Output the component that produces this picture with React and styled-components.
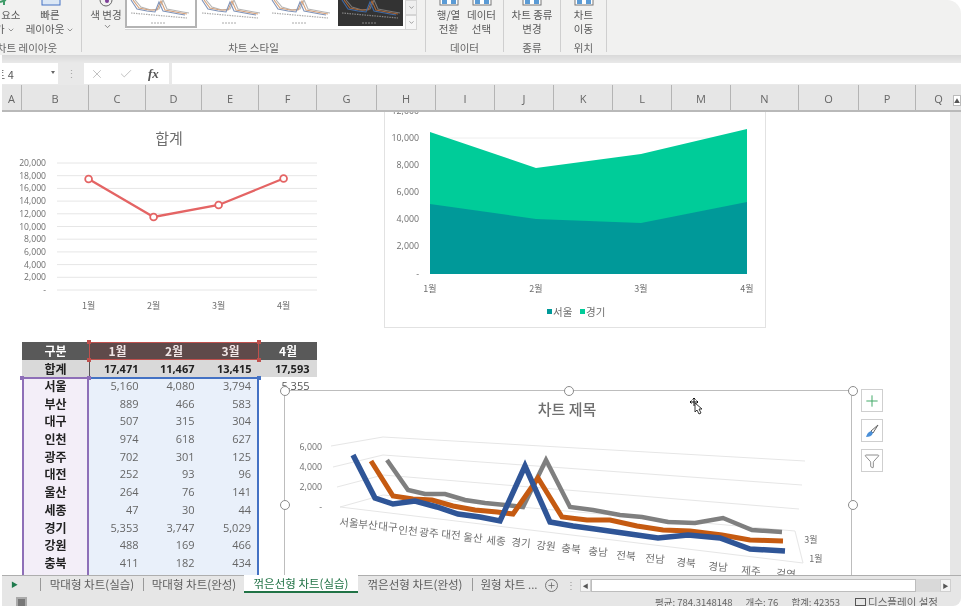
import React from 'react';
import styled, { createGlobalStyle } from 'styled-components';
import { X, Check, ChevronDown, Plus, Funnel } from 'lucide-react';

const KR = `"Noto Sans CJK KR", "Open Sans", sans-serif`;
const NUM = `"Open Sans", "Noto Sans CJK KR", sans-serif`;

const Global = createGlobalStyle`
  html, body { margin: 0; padding: 0; background: #fff; overflow: hidden; }
  #root { width: 961px; height: 606px; overflow: hidden; }
  * { box-sizing: border-box; }
`;

const Page = styled.div`
  width: 961px; height: 606px; position: relative; overflow: hidden;
  display: flex; flex-direction: column; background: #fff;
  font-family: ${KR}; color: #555; filter: blur(0.6px);
`;

/* ribbon */
const Ribbon = styled.div`
  height: 55px; flex: none; display: flex; background: #f1f1f0; overflow: hidden;
  border-top-right-radius: 14px;
`;
const Group = styled.section`
  width: ${p => p.$w}px; flex: none; height: 52px; position: relative;
  display: flex; flex-direction: column; border-right: 1px solid #cfcfcf;
`;
const GroupBody = styled.div`
  flex: 1; display: flex; justify-content: ${p => p.$justify || 'center'}; min-height: 0;
  margin-left: ${p => p.$ml || 0}px;
`;
const GroupLabel = styled.div`
  height: 15px; margin-bottom: -3px; font-size: 10.5px; line-height: 15px; text-align: center; color: #666; white-space: nowrap;
  margin-left: ${p => p.$ml || 0}px;
`;
const RibbonButton = styled.div`
  width: ${p => p.$w}px; flex: none; display: flex; flex-direction: column; align-items: center;
  padding-left: ${p => p.$pl || 0}px;
  font-size: 10.5px; line-height: 13.5px; color: #5a5a5a; white-space: nowrap;
`;
const IconStub = styled.svg`
  display: block; width: 24px; height: 8px; flex: none;
`;
const Caret = styled(ChevronDown)`
  display: inline-block; vertical-align: -1px; margin-left: 2px; color: #666;
`;
const Gallery = styled.div`
  width: 292px; height: 30px; background: #fff; display: flex; align-items: flex-start;
  border-bottom: 1px solid #d6d6d6; position: relative;
`;
const Thumb = styled.svg`
  display: block; flex: none; width: ${p => p.$w}px; height: 26px; margin-left: ${p => p.$ml}px;
  background: ${p => p.$dark ? '#333' : '#fff'};
  outline: ${p => p.$sel ? '2px solid #b4b4b4' : 'none'};
`;
const GalleryArrows = styled.div`
  position: absolute; right: 0; top: 0; width: 12px; height: 30px; display: flex; flex-direction: column;
`;
const GalleryArrow = styled.div`
  flex: 1; border: 1px solid #d5d5d5; background: ${p => p.$on ? '#f6f6f6' : '#efefef'};
  display: flex; align-items: center; justify-content: center; color: #666;
`;

/* formula bar */
const Shade = styled.div`
  height: 8px; flex: none; margin-left: 2px;
  background: linear-gradient(#d9d9d9, #e9e9e9);
`;
const FormulaRow = styled.div`
  height: 22px; flex: none; margin-left: 2px; display: flex; background: #e9e9e9;
`;
const NameBox = styled.div`
  width: 56px; height: 21px; flex: none; background: #fff; display: flex; align-items: center;
  position: relative; overflow: hidden; font-size: 11px; color: #555;
`;
const NameText = styled.span`
  margin-left: -17px; white-space: nowrap; font-family: ${KR};
`;
const NameCaret = styled.span`
  position: absolute; right: 3px; top: 8px; width: 0; height: 0;
  border-left: 2.5px solid transparent; border-right: 2.5px solid transparent; border-top: 3px solid #666;
`;
const Grip = styled.div`
  width: 26px; flex: none; text-align: center; color: #aaa; font-size: 11px; line-height: 20px;
`;
const FxBox = styled.div`
  width: 85px; height: 21px; flex: none; background: #fff; display: flex; align-items: center;
  gap: 15px; padding-left: 6px; color: #b4b4b4;
`;
const Fx = styled.i`
  font-family: "Liberation Serif", serif; font-size: 13px; color: #555; font-weight: 700;
`;
const FormulaInput = styled.div`
  flex: 1; height: 21px; background: #fff; margin-left: 3px;
`;

/* column headers */
const HeaderRow = styled.div`
  height: 27px; flex: none; margin-left: 2px; display: flex; background: #e6e6e6;
  border-bottom: 2px solid #b9b9b9;
`;
const ColHead = styled.div`
  width: ${p => p.$w}px; flex: none; border-right: 1px solid #b4b4b4; text-align: center;
  font: 11px/27px ${NUM}; color: #666; &:last-child { border-right: 0; }
`;

/* sheet */
const Canvas = styled.div`
  height: 463px; flex: none; position: relative; overflow: hidden; background: #fff; padding: 230px 0 0 22px;
`;
const Table = styled.div`
  width: 295px;
  position: relative;
`;
const Row = styled.div`
  display: grid; grid-template-columns: 67px 57px 56px 57px 58px; height: ${p => p.$h}px;
`;
const tones = {
  head: 'background:#595959;color:#fff;font-weight:700;',
  sel: 'background:#5f4a4a;color:#f0e6e6;font-weight:700;',
  total: 'background:#d9d9d9;color:#222;font-weight:700;',
  name: 'background:#f3eef8;color:#222;font-weight:700;border-left:2px solid #8e6fb8;border-right:2px solid #8e6fb8;',
  val: 'background:#e9f0fa;color:#666;',
  valEnd: 'background:#e9f0fa;color:#666;border-right:2px solid #4472c4;',
  blank: 'background:#fff;color:#555;',
};
const Cell = styled.div`
  ${p => tones[p.$t]}
  font-family: ${p => p.$num ? NUM : KR};
  font-size: ${p => p.$num ? 11 : 12}px;
  line-height: ${p => p.$h}px;
  text-align: ${p => p.$num ? 'right' : 'center'};
  padding-right: ${p => p.$num ? (p.$t === 'valEnd' ? 6 : 7.5) : 0}px;
  white-space: nowrap;
`;
const SelBox = styled.div`
  position: absolute; left: 67px; top: 0; width: 170px; height: 18px; border: 1.5px solid #c0504d; pointer-events: none;
`;
const TotalTick = styled.div`
  position: absolute; left: 67px; top: 18px; width: 1px; height: 17px; background: #555;
`;
const RuleLine = styled.div`
  position: absolute; top: 35px; left: ${p => p.$l}px; width: ${p => p.$w}px; height: 2px; background: ${p => p.$c};
`;
const Dot = styled.i`
  position: absolute; left: ${p => p.$x - 2}px; top: ${p => p.$y - 2}px; width: 4px; height: 4px; background: ${p => p.$c};
`;

/* floating objects */
const Floating = styled.div`
  position: absolute; left: ${p => p.$x}px; top: ${p => p.$y - 112}px; width: ${p => p.$w}px; height: ${p => p.$h}px;
  background: ${p => p.$fill ? '#fff' : 'transparent'};
  border: ${p => p.$line ? `1px solid ${p.$line}` : '0'};
`;
const ChartSvg = styled.svg`
  display: block; position: absolute; left: ${p => p.$inset || 0}px; top: ${p => p.$inset || 0}px;
  overflow: hidden;
  text { font-family: ${NUM}; fill: #6f6f6f; }
`;
const Handle = styled.i`
  position: absolute; left: ${p => p.$x - 284 - 5}px; top: ${p => p.$y - 390 - 5}px; width: 10px; height: 10px;
  border-radius: 50%; background: #fff; border: 1.5px solid #8c8c8c;
`;
const SideTools = styled.div`
  position: absolute; left: 861px; top: 277px; display: flex; flex-direction: column; gap: 7px;
`;
const SideTool = styled.div`
  width: 22px; height: 23px; background: #fff; border: 1px solid #cfcfcf; display: flex; align-items: center; justify-content: center;
`;
const MoveCursor = styled.svg`
  position: absolute; left: 689px; top: 285px; width: 14px; height: 20px;
`;

/* scrollbars */
const VScroll = styled.div`
  position: absolute; left: 950px; top: 95px; width: 11px; height: 480px; display: flex; flex-direction: column;
  background: linear-gradient(transparent 17px, #e6e6e6 17px);
`;
const VBtn = styled.div`
  height: 11px; margin-left: 3px; background: #fff; border: 1px solid #bbb; color: #555; font-size: 6px; line-height: 9px; text-align: center;
`;

/* tabs */
const TabBar = styled.div`
  height: 20px; flex: none; display: flex; align-items: stretch; background: #e6e6e6; border-top: 1px solid #aeaeae;
  margin-left: 2px; font-size: 11.5px; color: #5e5e5e; white-space: nowrap;
`;
const TabArrow = styled.div`
  width: 38px; flex: none; color: #1f7a4d; font-size: 7px; line-height: 17px; padding-left: 9px;
`;
const Tab = styled.div`
  width: ${p => p.$w}px; flex: none; text-align: center;
  border-left: ${p => p.$sep ? '1px solid #999' : '0'};
  margin: ${p => p.$active ? '-1px 0 0' : '2px 0 4px'};
  line-height: ${p => p.$active ? '17px' : '12px'};
  ${p => p.$active ? 'background:#fff;color:#217346;border-bottom:2px solid #217346;height:18px;' : ''}
`;
const AddSheet = styled.div`
  width: 13px; height: 13px; flex: none; border: 1px solid #777; border-radius: 50%; margin-top: 3px;
  display: flex; align-items: center; justify-content: center; color: #666;
`;
const TabGrip = styled.div`
  width: 19px; flex: none; margin-left: 3px; text-align: center; color: #999; line-height: 18px; font-size: 10px;
`;
const HScroll = styled.div`
  width: 371px; flex: none; height: 13px; margin-top: 3px; display: flex; background: #d9d9d9;
`;
const HBtn = styled.div`
  width: 11px; flex: none; background: #f4f4f4; border: 1px solid #cfcfcf; color: #555; font-size: 6px; line-height: 11px; text-align: center;
`;
const HThumb = styled.div`
  width: 325px; flex: none; background: #fff; border: 1px solid #bdbdbd;
`;
const HSpace = styled.div` flex: 1; `;

/* status */
const StatusBar = styled.div`
  height: 11px; flex: none; display: flex; background: #e6e6e6; margin-left: 2px; overflow: hidden; position: relative;
  font-size: 10.5px; line-height: 14px; color: #666; white-space: nowrap;
  border-bottom-right-radius: 8px;
`;
const MacroIcon = styled.div`
  width: 11px; height: 11px; margin: 2px 0 0 14px; flex: none; background: #777; border: 2px solid #aaa;
`;
const StatusItems = styled.div`
  margin-left: auto; display: flex; gap: 13px; padding: 0 23px 0 0;
`;
const StatusStat = styled.span`
  font-size: 9.5px;
`;
const StatusDisplay = styled.span`
  margin-left: 2px;
`;
const StatusScreen = styled.span`
  display: inline-block; width: 11px; height: 8px; border: 1.5px solid #555; margin-right: 2px; vertical-align: 0;
`;

const columns = [['A',20],['B',67],['C',57],['D',56],['E',57],['F',58],['G',60],['H',59],['I',59],['J',59],['K',59],['L',59],['M',59],['N',68],['O',60],['P',57],['Q',45]];
const rows = [
  ['서울','5,160','4,080','3,794','5,355'],['부산','889','466','583',''],['대구','507','315','304',''],
  ['인천','974','618','627',''],['광주','702','301','125',''],['대전','252','93','96',''],
  ['울산','264','76','141',''],['세종','47','30','44',''],['경기','5,353','3,747','5,029',''],
  ['강원','488','169','466',''],['충북','411','182','434',''],
];

const pts = a => a.map(p => p.join(',')).join(' ');
const blue = [[353,455],[375,498],[393,504],[415,501],[437,507],[458,514],[480,517],[500,521],[525,466],[550,522],[573,526],[595,529],[630,534],[658,538],[688,535],[720,538],[750,549],[785,551]];
const orange = [[371,461],[393,496],[413,499],[432,500],[453,506],[475,510],[497,512],[513,514],[538,478],[562,517],[587,520],[610,520],[637,526],[663,530],[690,531],[722,535],[750,540],[783,541]];
const gray = [[387,460],[408,490],[425,494],[445,494],[465,500],[485,503],[505,505],[523,507],[546,460],[570,507],[593,510],[620,515],[642,517],[668,522],[695,523],[723,518],[752,530],[782,532]];
const cats = [['서울',349,523],['부산',368,525],['대구',388,527],['인천',408,531],['광주',429,533],['대전',451,535],['울산',473,538],['세종',496,541],['경기',521,543],['강원',546,546],['충북',571,549],['충남',598,552],['전북',626,556],['전남',655,559],['경북',686,563],['경남',718,567],['제주',751,571],['검역',786,574]];

const MiniChart = ({ dark }) => {
  const c = dark ? ['#3f6aa5','#a8683a','#777'] : ['#7f93b8','#d4a07a','#b5b5b5'];
  const base = dark ? '#888' : '#aaa';
  return (
    <g fill="none" strokeWidth="1.1">
      <polyline stroke={c[2]} points="8,0 14,7 24,10 32,9 36,0 40,9 56,12 62,13" />
      <polyline stroke={c[1]} points="6,0 12,8 22,10 30,10 34,1 38,10 54,13 60,14" />
      <polyline stroke={c[0]} points="4,0 10,9 20,11 28,12 32,2 36,11 52,14 58,15" />
      <line x1="4" y1="13" x2="60" y2="18" stroke={base} strokeWidth="1.2" strokeDasharray="1.5 1" />
      <line x1="24" y1="23" x2="38" y2="23" stroke={base} strokeWidth="1" strokeDasharray="2 1" />
    </g>
  );
};

const ClusterIcon = ({ tone = '#5b9bd5' }) => (
  <IconStub viewBox="0 0 24 8">
    <rect x="3" y="-3" width="18" height="8" fill="#fff" stroke="#777" />
    <rect x="5" y="-2" width="5" height="6" fill={tone} />
    <rect x="14" y="-2" width="5" height="6" fill={tone} />
  </IconStub>
);

export default function App() {
  return (
    <Page>
      <Global />
      <Ribbon>
        <Group $w={82}>
          <GroupBody $justify="flex-start" $ml={-24}>
            <RibbonButton $w={48}>
              <IconStub viewBox="0 0 24 8"><path d="M16 5 V0 M12 2 L18 0" stroke="#3f9b68" strokeWidth="2" /></IconStub>
              <span>차트 요소</span>
              <span>추가<Caret size={8} /></span>
            </RibbonButton>
            <RibbonButton $w={52}>
              <IconStub viewBox="0 0 24 8"><rect x="4" y="-3" width="18" height="8" fill="#dbe7f5" stroke="#4472c4" /></IconStub>
              <span>빠른</span>
              <span>레이아웃<Caret size={8} /></span>
            </RibbonButton>
          </GroupBody>
          <GroupLabel $ml={-27}>차트 레이아웃</GroupLabel>
        </Group>
        <Group $w={344}>
          <GroupBody $justify="flex-start">
            <RibbonButton $w={43} $pl={5}>
              <IconStub viewBox="0 0 24 8">
                <ellipse cx="12" cy="0" rx="6" ry="6" fill="none" stroke="#666" />
                <circle cx="13" cy="1" r="2" fill="#7e3f98" />
              </IconStub>
              <span>색 변경</span>
              <Caret size={9} />
            </RibbonButton>
            <Gallery>
              <Thumb $w={68} $ml={2} $sel viewBox="0 0 68 26"><MiniChart /></Thumb>
              <Thumb $w={64} $ml={3} viewBox="0 0 64 26"><MiniChart /></Thumb>
              <Thumb $w={62} $ml={6} viewBox="0 0 62 26"><MiniChart /></Thumb>
              <Thumb $w={65} $ml={8} $dark viewBox="0 0 65 26"><MiniChart dark /></Thumb>
              <GalleryArrows>
                <GalleryArrow><ChevronDown size={7} /></GalleryArrow>
                <GalleryArrow $on><ChevronDown size={7} /></GalleryArrow>
              </GalleryArrows>
            </Gallery>
          </GroupBody>
          <GroupLabel>차트 스타일</GroupLabel>
        </Group>
        <Group $w={78}>
          <GroupBody>
            <RibbonButton $w={34}><ClusterIcon /><span>행/열</span><span>전환</span></RibbonButton>
            <RibbonButton $w={32}><ClusterIcon /><span>데이터</span><span>선택</span></RibbonButton>
          </GroupBody>
          <GroupLabel>데이터</GroupLabel>
        </Group>
        <Group $w={57}>
          <GroupBody>
            <RibbonButton $w={50}><ClusterIcon /><span>차트 종류</span><span>변경</span></RibbonButton>
          </GroupBody>
          <GroupLabel>종류</GroupLabel>
        </Group>
        <Group $w={46}>
          <GroupBody>
            <RibbonButton $w={40}><ClusterIcon /><span>차트</span><span>이동</span></RibbonButton>
          </GroupBody>
          <GroupLabel>위치</GroupLabel>
        </Group>
      </Ribbon>
      <Shade />
      <FormulaRow>
        <NameBox><NameText>차트 4</NameText><NameCaret /></NameBox>
        <Grip>⋮</Grip>
        <FxBox>
          <X size={14} strokeWidth={1.4} />
          <Check size={14} strokeWidth={1.4} />
          <Fx>fx</Fx>
        </FxBox>
        <FormulaInput />
      </FormulaRow>
      <HeaderRow>
        {columns.map(([n, w]) => <ColHead key={n} $w={w}>{n}</ColHead>)}
      </HeaderRow>
      <Canvas>
        <Table>
          <Row $h={18}>
            <Cell $t="head" $h={18}>구분</Cell>
            <Cell $t="sel" $h={18}>1월</Cell><Cell $t="sel" $h={18}>2월</Cell><Cell $t="sel" $h={18}>3월</Cell>
            <Cell $t="head" $h={18}>4월</Cell>
          </Row>
          <Row $h={17}>
            <Cell $t="total" $h={17}>합계</Cell>
            {['17,471','11,467','13,415','17,593'].map(v => <Cell key={v} $t="total" $h={17} $num>{v}</Cell>)}
          </Row>
          {rows.map(r => (
            <Row key={r[0]} $h={17.7}>
              <Cell $t="name" $h={17.7}>{r[0]}</Cell>
              <Cell $t="val" $h={17.7} $num>{r[1]}</Cell>
              <Cell $t="val" $h={17.7} $num>{r[2]}</Cell>
              <Cell $t="valEnd" $h={17.7} $num>{r[3]}</Cell>
              <Cell $t="blank" $h={17.7} $num>{r[4]}</Cell>
            </Row>
          ))}
          <Row $h={17.7}>
            <Cell $t="name" $h={17.7} />
            <Cell $t="val" $h={17.7} /><Cell $t="val" $h={17.7} /><Cell $t="valEnd" $h={17.7} /><Cell $t="blank" $h={17.7} />
          </Row>
          <SelBox />
          <TotalTick />
          <RuleLine $l={0} $w={67} $c="#8e6fb8" />
          <RuleLine $l={67} $w={170} $c="#4472c4" />
          <Dot $x={67} $y={0} $c="#c0504d" /><Dot $x={237} $y={0} $c="#c0504d" />
          <Dot $x={67} $y={18} $c="#c0504d" /><Dot $x={237} $y={18} $c="#c0504d" />
          <Dot $x={0} $y={36} $c="#8e6fb8" /><Dot $x={67} $y={36} $c="#8e6fb8" /><Dot $x={237} $y={36} $c="#4472c4" />
        </Table>

        <Floating $x={0} $y={112} $w={340} $h={210}>
          <ChartSvg width="340" height="210" viewBox="0 112 340 210">
            <text x="169" y="144" textAnchor="middle" fontSize="15" style={{ fontFamily: KR }}>합계</text>
            {[0,1,2,3,4,5,6,7,8,9,10].map(i => {
              const y = 163 + i * 12.7;
              return (
                <g key={i}>
                  <line x1="57" x2="317" y1={y} y2={y} stroke="#e6e6e6" />
                  <text x="46" y={y + 3} textAnchor="end" fontSize="8.6">{i === 10 ? '-' : (20000 - i * 2000).toLocaleString('en-US')}</text>
                </g>
              );
            })}
            <polyline points="88.6,179 153.6,217 218.6,205 283.6,178.5" fill="none" stroke="#e46464" strokeWidth="2.3" />
            {[[88.6,179],[153.6,217],[218.6,205],[283.6,178.5]].map(([x, y]) => (
              <circle key={x} cx={x} cy={y} r="3.4" fill="#fff" stroke="#e46464" strokeWidth="1.8" />
            ))}
            {[['1월',88.6],['2월',153.6],['3월',218.6],['4월',283.6]].map(([t, x]) => (
              <text key={t} x={x} y="309" textAnchor="middle" fontSize="9" style={{ fontFamily: KR }}>{t}</text>
            ))}
          </ChartSvg>
        </Floating>

        <Floating $x={384} $y={100} $w={382} $h={228} $fill $line="#e2e2e2">
          <ChartSvg $inset={0} width="380" height="226" viewBox="385 101 380 226">
            <line x1="430" x2="747" y1="138" y2="138" stroke="#eee" />
            <text x="419" y="114" textAnchor="end" fontSize="8.8">12,000</text>
            {[['10,000',138],['8,000',165],['6,000',192],['4,000',219],['2,000',246],['-',274]].map(([t, y]) => (
              <text key={t} x="419" y={y + 3} textAnchor="end" fontSize="8.8">{t}</text>
            ))}
            <polygon points="430,132 536,168 641,154 747,129 747,274 430,274" fill="#00cc99" />
            <polygon points="430,204 536,219 641,223 747,202 747,274 430,274" fill="#009999" />
            {[['1월',430],['2월',536],['3월',641],['4월',747]].map(([t, x]) => (
              <text key={t} x={x} y="292" textAnchor="middle" fontSize="9" style={{ fontFamily: KR }}>{t}</text>
            ))}
            <rect x="547" y="309" width="5" height="5" fill="#009999" />
            <text x="553" y="316" fontSize="10.5" style={{ fontFamily: KR }}>서울</text>
            <rect x="580" y="309" width="5" height="5" fill="#00cc99" />
            <text x="586" y="316" fontSize="10.5" style={{ fontFamily: KR }}>경기</text>
          </ChartSvg>
        </Floating>

        <Floating $x={284} $y={390} $w={568} $h={300} $fill $line="#bdbdbd">
          <ChartSvg $inset={-1} width="568" height="300" viewBox="284 390 568 300">
            <text x="567" y="415" textAnchor="middle" fontSize="15" fontWeight="500" style={{ fontFamily: KR }}>차트 제목</text>
            <g fill="none" stroke="#e6e6e6">
              <polyline points="331,446 383,437 805,461" />
              <polyline points="333,467 383,455 802,485" />
              <polyline points="337,487 383,475 799,509" />
              <polyline points="340,507 383,495 795,531 803,563 340,507" />
            </g>
            {[['6,000',447],['4,000',467],['2,000',487],['-',507]].map(([t, y]) => (
              <text key={t} x="322" y={y + 3} textAnchor="end" fontSize="8.8">{t}</text>
            ))}
            <polyline points={pts(gray)} fill="none" stroke="#7f7f7f" strokeWidth="4.5" strokeLinejoin="miter" />
            <polyline points={pts(orange)} fill="none" stroke="#c55a11" strokeWidth="5" strokeLinejoin="miter" />
            <polyline points={pts(blue)} fill="none" stroke="#2f5597" strokeWidth="5.5" strokeLinejoin="miter" />
            {cats.map(([t, x, y]) => (
              <text key={t} x={x} y={y + 3.5} textAnchor="middle" fontSize="10.5" transform={`rotate(5 ${x} ${y})`} style={{ fontFamily: KR }}>{t}</text>
            ))}
            <text x="811" y="543" textAnchor="middle" fontSize="9" style={{ fontFamily: KR }}>3월</text>
            <text x="816" y="562" textAnchor="middle" fontSize="9" style={{ fontFamily: KR }}>1월</text>
          </ChartSvg>
          <Handle $x={284} $y={390} /><Handle $x={568} $y={390} /><Handle $x={852} $y={390} />
          <Handle $x={284} $y={504} /><Handle $x={852} $y={504} />
        </Floating>

        <SideTools>
          <SideTool><Plus size={18} strokeWidth={1.3} color="#3fa866" /></SideTool>
          <SideTool>
            <svg width="16" height="16" viewBox="0 0 16 16">
              <path d="M14 2 L7 8 L9 10 Z" fill="none" stroke="#666" />
              <path d="M7 8 C4 9 3 11 2 14 C5 14 8 13 9 10 Z" fill="#4a8fd8" />
            </svg>
          </SideTool>
          <SideTool><Funnel size={16} strokeWidth={1} color="#555" /></SideTool>
        </SideTools>

        <MoveCursor viewBox="0 0 14 20">
          <path d="M5 1 V9 M1 5 H9 M5 1 L3.5 2.5 M5 1 L6.5 2.5 M1 5 L2.5 3.5 M1 5 L2.5 6.5 M9 5 L7.5 3.5 M9 5 L7.5 6.5" stroke="#111" fill="none" />
          <path d="M6 6 L6 15 L8 13 L10 17 L12 16 L10 12 L13 12 Z" fill="#fff" stroke="#222" strokeWidth="0.9" />
        </MoveCursor>
      </Canvas>
      <TabBar>
        <TabArrow>▶</TabArrow>
        <Tab $sep $w={103}>막대형 차트(실습)</Tab>
        <Tab $sep $w={101}>막대형 차트(완성)</Tab>
        <Tab $active $w={114}>꺾은선형 차트(실습)</Tab>
        <Tab $w={114}>꺾은선형 차트(완성)</Tab>
        <Tab $sep $w={73}>원형 차트 ...</Tab>
        <AddSheet><Plus size={9} /></AddSheet>
        <TabGrip>⋮</TabGrip>
        <HScroll>
          <HBtn>◀</HBtn>
          <HThumb />
          <HSpace />
          <HBtn>▶</HBtn>
        </HScroll>
      </TabBar>
      <StatusBar>
        <MacroIcon />
        <StatusItems>
          <StatusStat>평균: 784.3148148</StatusStat>
          <StatusStat>개수: 76</StatusStat>
          <StatusStat>합계: 42353</StatusStat>
          <StatusDisplay><StatusScreen />디스플레이 설정</StatusDisplay>
        </StatusItems>
      </StatusBar>
      <VScroll><VBtn>▲</VBtn></VScroll>
    </Page>
  );
}
